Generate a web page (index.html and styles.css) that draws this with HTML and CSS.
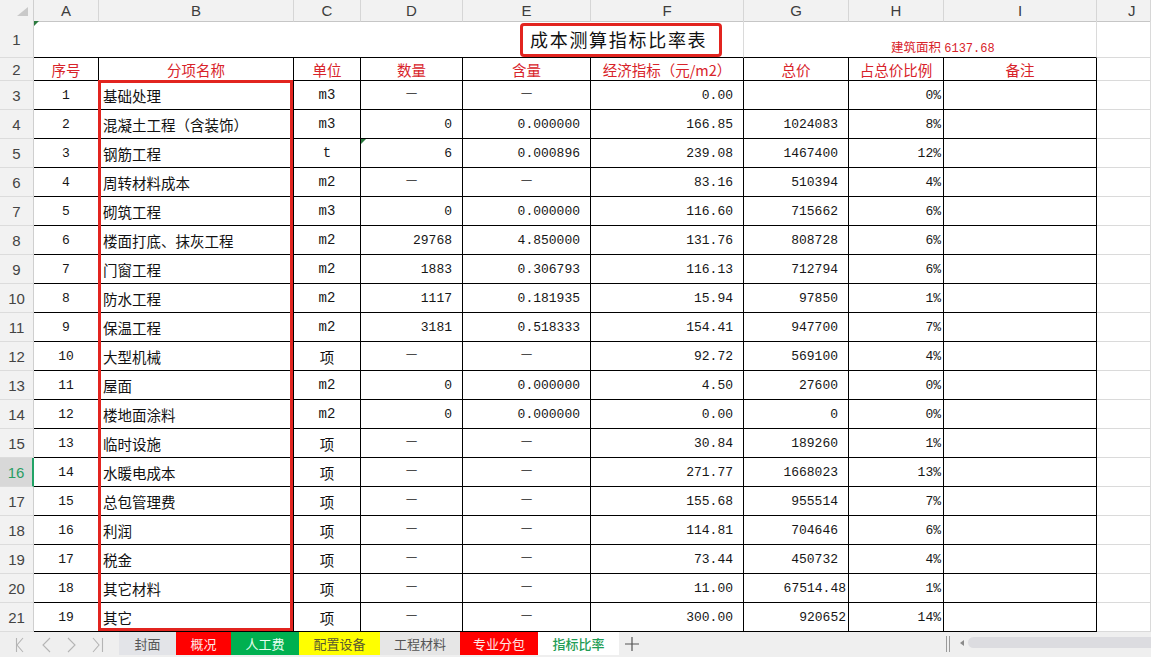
FILE: index.html
```html
<!DOCTYPE html>
<html lang="zh-CN">
<head>
<meta charset="utf-8">
<title>成本测算指标比率表</title>
<link rel="stylesheet" href="styles.css">
</head>
<body>
<div class="sheet">
  <div class="row r-hd">
    <div class="corner"><svg width="34" height="21" viewBox="0 0 34 21"><polygon points="28,7 28,16 17,16" fill="#c9c9c9"/></svg></div>
    <div class="ch">A</div><div class="ch">B</div><div class="ch">C</div><div class="ch">D</div><div class="ch">E</div><div class="ch">F</div><div class="ch">G</div><div class="ch">H</div><div class="ch">I</div><div class="ch chj">J</div>
  </div>

  <div class="row r1">
    <div class="rh">1</div>
    <div class="c bb tri span-af"><span class="title">成本测算指标比率表</span></div>
    <div class="c bb span-gi"><span class="area"><span class="area-cn">建筑面积</span> <span class="area-n">6137.68</span></span></div>
    <div class="c"></div>
  </div>

  <div class="row r2">
    <div class="rh">2</div>
    <div class="c t hd">序号</div><div class="c t hd">分项名称</div><div class="c t hd">单位</div><div class="c t hd">数量</div><div class="c t hd">含量</div><div class="c t hd">经济指标（元/m2）</div><div class="c t hd">总价</div><div class="c t hd">占总价比例</div><div class="c t hd">备注</div>
    <div class="c"></div>
  </div>

  <div class="row rd"><div class="rh">3</div><div class="c t ctr n">1</div><div class="c t nm">基础处理</div><div class="c t ctr n u">m3</div><div class="c t ctr dash">—</div><div class="c t ctr dash">—</div><div class="c t rt n">0.00</div><div class="c t rt n"></div><div class="c t pc n">0%</div><div class="c t"></div><div class="c"></div></div>
  <div class="row rd"><div class="rh">4</div><div class="c t ctr n">2</div><div class="c t nm">混凝土工程（含装饰）</div><div class="c t ctr n u">m3</div><div class="c t rt n">0</div><div class="c t rt n">0.000000</div><div class="c t rt n">166.85</div><div class="c t rt n">1024083</div><div class="c t pc n">8%</div><div class="c t"></div><div class="c"></div></div>
  <div class="row rd"><div class="rh">5</div><div class="c t ctr n">3</div><div class="c t nm">钢筋工程</div><div class="c t ctr n u">t</div><div class="c t rt n tri">6</div><div class="c t rt n">0.000896</div><div class="c t rt n">239.08</div><div class="c t rt n">1467400</div><div class="c t pc n">12%</div><div class="c t"></div><div class="c"></div></div>
  <div class="row rd"><div class="rh">6</div><div class="c t ctr n">4</div><div class="c t nm">周转材料成本</div><div class="c t ctr n u">m2</div><div class="c t ctr dash">—</div><div class="c t ctr dash">—</div><div class="c t rt n">83.16</div><div class="c t rt n">510394</div><div class="c t pc n">4%</div><div class="c t"></div><div class="c"></div></div>
  <div class="row rd"><div class="rh">7</div><div class="c t ctr n">5</div><div class="c t nm">砌筑工程</div><div class="c t ctr n u">m3</div><div class="c t rt n">0</div><div class="c t rt n">0.000000</div><div class="c t rt n">116.60</div><div class="c t rt n">715662</div><div class="c t pc n">6%</div><div class="c t"></div><div class="c"></div></div>
  <div class="row rd"><div class="rh">8</div><div class="c t ctr n">6</div><div class="c t nm">楼面打底、抹灰工程</div><div class="c t ctr n u">m2</div><div class="c t rt n">29768</div><div class="c t rt n">4.850000</div><div class="c t rt n">131.76</div><div class="c t rt n">808728</div><div class="c t pc n">6%</div><div class="c t"></div><div class="c"></div></div>
  <div class="row rd"><div class="rh">9</div><div class="c t ctr n">7</div><div class="c t nm">门窗工程</div><div class="c t ctr n u">m2</div><div class="c t rt n">1883</div><div class="c t rt n">0.306793</div><div class="c t rt n">116.13</div><div class="c t rt n">712794</div><div class="c t pc n">6%</div><div class="c t"></div><div class="c"></div></div>
  <div class="row rd"><div class="rh">10</div><div class="c t ctr n">8</div><div class="c t nm">防水工程</div><div class="c t ctr n u">m2</div><div class="c t rt n">1117</div><div class="c t rt n">0.181935</div><div class="c t rt n">15.94</div><div class="c t rt n">97850</div><div class="c t pc n">1%</div><div class="c t"></div><div class="c"></div></div>
  <div class="row rd"><div class="rh">11</div><div class="c t ctr n">9</div><div class="c t nm">保温工程</div><div class="c t ctr n u">m2</div><div class="c t rt n">3181</div><div class="c t rt n">0.518333</div><div class="c t rt n">154.41</div><div class="c t rt n">947700</div><div class="c t pc n">7%</div><div class="c t"></div><div class="c"></div></div>
  <div class="row rd"><div class="rh">12</div><div class="c t ctr n">10</div><div class="c t nm">大型机械</div><div class="c t ctr">项</div><div class="c t ctr dash">—</div><div class="c t ctr dash">—</div><div class="c t rt n">92.72</div><div class="c t rt n">569100</div><div class="c t pc n">4%</div><div class="c t"></div><div class="c"></div></div>
  <div class="row rd"><div class="rh">13</div><div class="c t ctr n">11</div><div class="c t nm">屋面</div><div class="c t ctr n u">m2</div><div class="c t rt n">0</div><div class="c t rt n">0.000000</div><div class="c t rt n">4.50</div><div class="c t rt n">27600</div><div class="c t pc n">0%</div><div class="c t"></div><div class="c"></div></div>
  <div class="row rd"><div class="rh">14</div><div class="c t ctr n">12</div><div class="c t nm">楼地面涂料</div><div class="c t ctr n u">m2</div><div class="c t rt n">0</div><div class="c t rt n">0.000000</div><div class="c t rt n">0.00</div><div class="c t rt n">0</div><div class="c t pc n">0%</div><div class="c t"></div><div class="c"></div></div>
  <div class="row rd"><div class="rh">15</div><div class="c t ctr n">13</div><div class="c t nm">临时设施</div><div class="c t ctr">项</div><div class="c t ctr dash">—</div><div class="c t ctr dash">—</div><div class="c t rt n">30.84</div><div class="c t rt n">189260</div><div class="c t pc n">1%</div><div class="c t"></div><div class="c"></div></div>
  <div class="row rd"><div class="rh sel">16</div><div class="c t ctr n">14</div><div class="c t nm">水暖电成本</div><div class="c t ctr">项</div><div class="c t ctr dash">—</div><div class="c t ctr dash">—</div><div class="c t rt n">271.77</div><div class="c t rt n">1668023</div><div class="c t pc n">13%</div><div class="c t"></div><div class="c"></div></div>
  <div class="row rd"><div class="rh">17</div><div class="c t ctr n">15</div><div class="c t nm">总包管理费</div><div class="c t ctr">项</div><div class="c t ctr dash">—</div><div class="c t ctr dash">—</div><div class="c t rt n">155.68</div><div class="c t rt n">955514</div><div class="c t pc n">7%</div><div class="c t"></div><div class="c"></div></div>
  <div class="row rd"><div class="rh">18</div><div class="c t ctr n">16</div><div class="c t nm">利润</div><div class="c t ctr">项</div><div class="c t ctr dash">—</div><div class="c t ctr dash">—</div><div class="c t rt n">114.81</div><div class="c t rt n">704646</div><div class="c t pc n">6%</div><div class="c t"></div><div class="c"></div></div>
  <div class="row rd"><div class="rh">19</div><div class="c t ctr n">17</div><div class="c t nm">税金</div><div class="c t ctr">项</div><div class="c t ctr dash">—</div><div class="c t ctr dash">—</div><div class="c t rt n">73.44</div><div class="c t rt n">450732</div><div class="c t pc n">4%</div><div class="c t"></div><div class="c"></div></div>
  <div class="row rd"><div class="rh">20</div><div class="c t ctr n">18</div><div class="c t nm">其它材料</div><div class="c t ctr">项</div><div class="c t ctr dash">—</div><div class="c t ctr dash">—</div><div class="c t rt n">11.00</div><div class="c t rt tight n">67514.48</div><div class="c t pc n">1%</div><div class="c t"></div><div class="c"></div></div>
  <div class="row rd"><div class="rh">21</div><div class="c t ctr n">19</div><div class="c t nm">其它</div><div class="c t ctr">项</div><div class="c t ctr dash">—</div><div class="c t ctr dash">—</div><div class="c t rt n">300.00</div><div class="c t rt tight n">920652</div><div class="c t pc n">14%</div><div class="c t"></div><div class="c"></div></div>

  <div class="box-title"></div>
  <div class="box-col"></div>
</div>

<div class="tabbar">
  <div class="nav">
    <svg width="119" height="25" viewBox="0 0 119 25" fill="none" stroke="#b4b4b4" stroke-width="1.1">
      <path d="M16.5 6v14M23 6l-6 7 6 7"/>
      <path d="M50 6l-7 7 7 7"/>
      <path d="M68 6l7 7-7 7"/>
      <path d="M93 6l6 7-6 7M102.5 6v14"/>
    </svg>
  </div>
  <div class="tab t-cover">封面</div>
  <div class="tab t-red">概况</div>
  <div class="tab t-green">人工费</div>
  <div class="tab t-yellow">配置设备</div>
  <div class="tab t-grey">工程材料</div>
  <div class="tab t-red t-red2">专业分包</div>
  <div class="tab t-active">指标比率</div>
  <div class="plus"><svg width="14" height="14" viewBox="0 0 14 14" stroke="#555" stroke-width="1.2"><path d="M7 0v14M0 7h14"/></svg></div>
  <div class="spacer"></div>
  <div class="split"><svg width="6" height="16" viewBox="0 0 6 16" stroke="#9a9a9a" stroke-width="1"><path d="M1.5 0v16M4.5 0v16"/></svg></div>
  <div class="sarrow"><svg width="6" height="6" viewBox="0 0 6 6"><polygon points="5,0 5,6 1,3" fill="#8a8a8a"/></svg></div>
  <div class="thumb"></div>
</div>
</body>
</html>
```

FILE: styles.css
```css
* { box-sizing: border-box; margin: 0; padding: 0; }

html, body {
  width: 1151px;
  height: 657px;
  overflow: hidden;
  background: #fff;
  font-family: "Noto Sans CJK SC", "Liberation Sans", sans-serif;
}

.sheet { position: relative; }

.row {
  display: grid;
  grid-template-columns: 34px 65px 195px 67px 102px 128px 153px 105px 95px 153px 1fr;
}
.r-hd { height: 21px; }
.r1 { height: 37px; }
.r2 { height: 23px; }
.rd { height: 29px; }

.corner {
  background: #f2f2f2;
  border-right: 1px solid #cfcfcf;
  border-bottom: 1px solid #c6c6c6;
}
.corner svg { display: block; }

.ch {
  background: #f2f2f2;
  border-right: 1px solid #d6d6d6;
  border-bottom: 1px solid #c6c6c6;
  display: flex;
  align-items: center;
  justify-content: center;
  font-family: "Liberation Sans", sans-serif;
  font-size: 15px;
  color: #3d3d3d;
}
.chj { justify-content: flex-start; padding-left: 31px; }

.rh {
  background: #f2f2f2;
  border-right: 1px solid #cfcfcf;
  border-bottom: 1px solid #dcdcdc;
  display: flex;
  align-items: center;
  justify-content: center;
  font-family: "Liberation Sans", sans-serif;
  font-size: 15px;
  color: #444;
}
.rh.sel {
  background: #d8d8d8;
  color: #2a9d63;
  border-right: 2px solid #21a366;
}

.c {
  position: relative;
  border-right: 1px solid #dadada;
  border-bottom: 1px solid #dadada;
  display: flex;
  align-items: center;
  white-space: nowrap;
  font-size: 14.5px;
  color: #111;
}
.t { border-right-color: #000; border-bottom-color: #000; }
.bb { border-bottom-color: #000; }

.span-af { grid-column: 2 / 8; padding-left: 496px; }
.span-gi { grid-column: 8 / 11; align-items: flex-end; padding-left: 147px; }

.title {
  font-size: 18px;
  font-weight: 400;
  letter-spacing: 1.7px;
  color: #111;
}
.area { color: #d8232a; line-height: 13px; padding-bottom: 1px; }
.area-cn { font-size: 12.5px; }
.area-n { font-family: "Liberation Mono", monospace; font-size: 12px; }

.hd {
  justify-content: center;
  color: #d8232a;
  font-size: 14.5px;
}

.ctr { justify-content: center; }
.rt { justify-content: flex-end; padding-right: 10px; }
.rt.tight { padding-right: 2px; }
.pc { justify-content: flex-end; padding-right: 2px; }
.nm { padding-left: 4px; }
.n {
  font-family: "Liberation Mono", monospace;
  font-size: 13px;
  color: #161616;
}
.u { font-size: 14px; }
.dash { font-size: 13px; color: #222; padding-bottom: 7px; }

.tri::before {
  content: "";
  position: absolute;
  left: 0;
  top: 0;
  border-top: 5px solid #2b7a3e;
  border-right: 5px solid transparent;
}

.box-title {
  position: absolute;
  left: 520px;
  top: 23px;
  width: 202px;
  height: 34px;
  border: 3px solid #e2241f;
  border-radius: 4px;
}
.box-col {
  position: absolute;
  left: 98px;
  top: 80px;
  width: 195px;
  height: 551px;
  border: 3px solid #e2241f;
}

.tabbar {
  height: 25px;
  display: flex;
  align-items: flex-start;
  background: #efefef;
  font-size: 13px;
}
.nav { width: 119px; height: 25px; }
.nav svg { display: block; }

.tab {
  height: 23px;
  display: flex;
  align-items: center;
  justify-content: center;
  color: #555;
}
.t-cover { width: 57px; background: #e3e4e8; }
.t-red { width: 55px; background: #ff0000; color: #ffe6e6; }
.t-red2 { width: 78px; }
.t-green { width: 68px; background: #00b050; color: #e6fff0; }
.t-yellow { width: 81px; background: #ffff00; color: #585830; }
.t-grey { width: 80px; background: #e6e6e6; }
.t-active { width: 81px; background: #fff; color: #1f9d55; font-weight: 500; }

.plus {
  width: 26px;
  height: 23px;
  display: flex;
  align-items: center;
  justify-content: center;
}
.plus svg { display: block; }
.spacer { flex: 1; }
.split { width: 16px; height: 25px; display: flex; align-items: center; justify-content: center; padding-bottom: 2px; }
.split svg { display: block; }
.sarrow { width: 12px; height: 25px; display: flex; align-items: center; justify-content: center; padding-bottom: 3px; }
.sarrow svg { display: block; }
.thumb {
  width: 183px;
  height: 11px;
  margin-top: 5px;
  background: #dcdce0;
  border-radius: 6px 0 0 6px;
}
```
